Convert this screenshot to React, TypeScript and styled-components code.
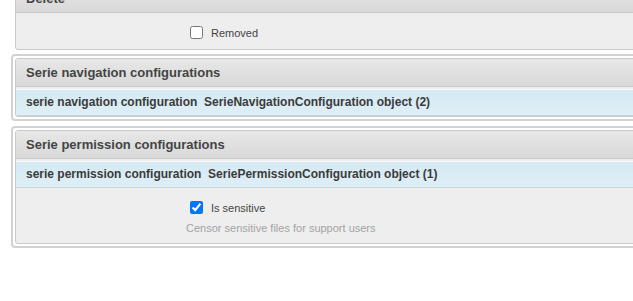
import styled, { createGlobalStyle } from 'styled-components';

const GlobalStyle = createGlobalStyle`
  html, body {
    margin: 0;
    padding: 0;
    background: #fff;
    overflow: hidden;
  }
  body {
    font-family: "Liberation Sans", Arial, sans-serif;
    color: #333;
  }
`;

const Page = styled.div`
  width: 720px;
  padding-left: 11px;
  display: flex;
  flex-direction: column;
  gap: 5px;
`;

const Collection = styled.div`
  border: 2px solid #d2d2d2;
  border-radius: 4px;
  padding: 2px;
`;

const Loose = styled.div`
  padding-left: 4px;
  margin-top: -16px;
  margin-bottom: -1px;
`;

const Panel = styled.div`
  border: 1px solid #c9c9c9;
  border-radius: 3px;
  background: #eeeeee;
  overflow: hidden;
`;

const Heading = styled.div`
  height: 27px;
  line-height: 27px;
  padding-left: 10px;
  font-size: 13px;
  font-weight: bold;
  color: #444;
  background: linear-gradient(#e7e7e7, #d9d9d9);
  border-bottom: 1px solid #c9c9c9;
`;

const ItemHeading = styled.div`
  height: 25px;
  line-height: 25px;
  margin-top: 2px;
  padding-left: 10px;
  font-size: 12px;
  font-weight: bold;
  color: #3b3b3b;
  background: linear-gradient(#d5eaf3, #deeef6);
  border-top: 1px solid #fafafa;
  border-bottom: 1px solid #c9d5da;
  white-space: pre;
`;

const Body = styled.div<{ $top: number; $bottom: number }>`
  padding: ${(p) => p.$top}px 0 ${(p) => p.$bottom}px 170px;
  display: flex;
  flex-direction: column;
`;

const CheckRow = styled.label`
  display: flex;
  align-items: center;
  font-size: 11px;
  color: #444;

  input {
    width: 13px;
    height: 13px;
    margin: 3px 8px 3px 4px;
  }
`;

const Help = styled.div`
  margin-top: 5px;
  font-size: 11px;
  color: #a3a3a3;
`;

export default function App() {
  return (
    <>
      <GlobalStyle />
      <Page>
        <Loose>
          <Panel>
            <Heading>Delete</Heading>
            <Body $top={10} $bottom={7}>
              <CheckRow>
                <input type="checkbox" readOnly />
                Removed
              </CheckRow>
            </Body>
          </Panel>
        </Loose>
        <Collection>
          <Panel>
            <Heading>Serie navigation configurations</Heading>
            <ItemHeading>serie navigation configuration  SerieNavigationConfiguration object (2)</ItemHeading>
          </Panel>
        </Collection>
        <Collection>
          <Panel>
            <Heading>Serie permission configurations</Heading>
            <ItemHeading>serie permission configuration  SeriePermissionConfiguration object (1)</ItemHeading>
            <Body $top={10} $bottom={9}>
              <CheckRow>
                <input type="checkbox" defaultChecked />
                Is sensitive
              </CheckRow>
              <Help>Censor sensitive files for support users</Help>
            </Body>
          </Panel>
        </Collection>
      </Page>
    </>
  );
}
